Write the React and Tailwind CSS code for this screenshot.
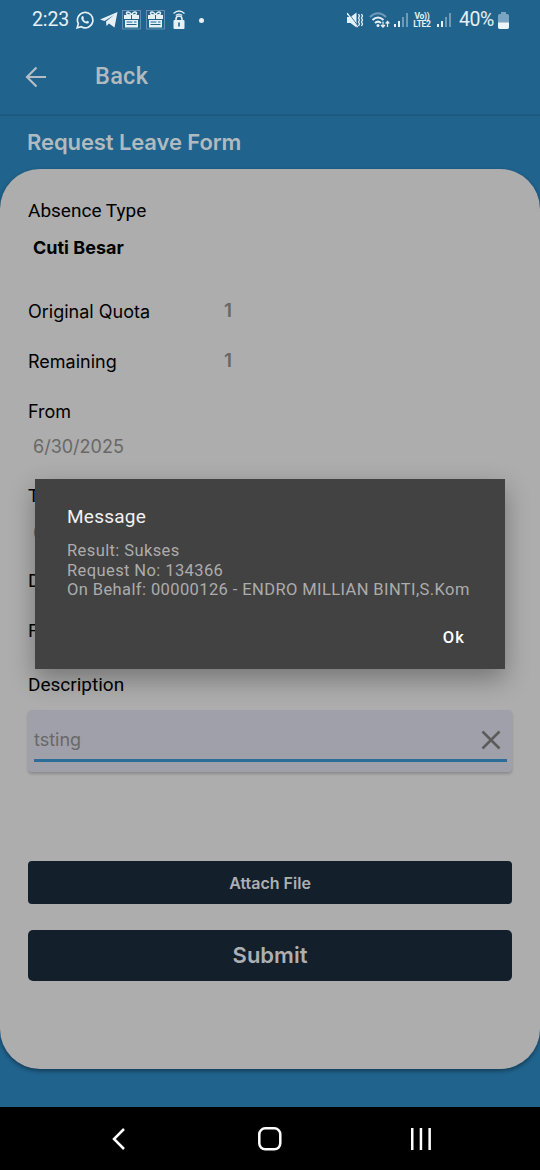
import React, { useState } from 'react';
import { IoLogoWhatsapp } from 'react-icons/io5';

function GiftIcon() {
    return (
        <svg width="19" height="20" viewBox="0 0 19 20" fill="none">
            <rect x="0.5" y="0.5" width="18" height="18.5" stroke="#6f9cb9" strokeWidth="0.8" />
            <path d="M9.5 5C8 1.5 4.500 1.200 4.500 3.200S7.500 5 9.500 5ZM9.500 5C11 1.500 14.500 1.200 14.500 3.200S11.500 5 9.500 5Z" stroke="#e6f0f5" strokeWidth="1.400" />
            <path d="M2 5h15v4H2zM3 10h13v7.500H3z" fill="#e6f0f5" />
            <path d="M9.500 5v4M4.500 12h6M4.500 14.500h10M12 12h2.500" stroke="#20638d" strokeWidth="1" />
        </svg>
    );
}

function SignalIcon() {
    return (
        <svg width="15" height="15" viewBox="0 0 15 15">
            <rect x="0" y="11" width="2" height="3" fill="#e6f0f5" />
            <rect x="4" y="8" width="2" height="6" fill="#e6f0f5" />
            <rect x="8" y="4" width="2" height="10" fill="#6e9ab6" />
            <rect x="12" y="0" width="2" height="14" fill="#6e9ab6" />
        </svg>
    );
}

function StatusBar() {
    return (
        <div className="flex h-10 items-center pl-8 text-[#e6f0f5]">
            <span className="w-[44px] whitespace-nowrap text-[19.5px] tracking-[-0.1px]">2:23</span>
            <svg className="shrink-0" width="18" height="18" viewBox="0 0 24 24" fill="none" stroke="currentColor" strokeWidth="2.2">
                <path d="M1.500 22.500l1.600-5.600A10.300 10.300 0 1 1 7 21z" />
                <path d="M8 7l1.500-.3 1.200 2.800-1 1.300c.8 1.600 2 2.700 3.600 3.500l1.400-1.300 2.700 1.300c-.2 2-1.500 2.700-3 2.500-3.800-.6-7-3.800-7.400-7.300C7 8.300 7.400 7.500 8 7z" fill="currentColor" stroke="none" />
            </svg>
            <svg className="ml-[6px] shrink-0" width="18" height="16" viewBox="0 0 18 16" fill="currentColor">
                <path d="M0 7.500L17.500 0 14.500 15.500 9 11.500 6.500 14 6 9.500 14 3 4.500 9z" />
            </svg>
            <span className="ml-[4px]"><GiftIcon /></span>
            <span className="ml-[5px]"><GiftIcon /></span>
            <svg className="ml-[7px] shrink-0" width="14" height="20" viewBox="0 0 14 20" fill="none" stroke="currentColor" strokeWidth="1.3">
                <path d="M1.500 3.500Q7-1.500 12.500 3.500M3.800 5.500Q7 2.700 10.200 5.500" />
                <path d="M4 11V9a3 3 0 0 1 6 0v2" strokeWidth="1.600" />
                <rect x="1.500" y="10" width="11" height="9" rx="1" fill="currentColor" stroke="none" />
                <path d="M7 12.500v4" stroke="#20638d" strokeWidth="1.600" />
            </svg>
            <span className="ml-[13px] size-[5px] rounded-full bg-[#e6f0f5]" />
            <div className="ml-auto flex items-center pr-[31px]">
                <svg width="16" height="16" viewBox="0 0 16 16" fill="none" stroke="currentColor">
                    <path d="M0 5h3.500L9.500 .5v15L3.500 11H0z" fill="currentColor" stroke="none" />
                    <path d="M0 1l11 14" strokeWidth="1.500" />
                    <path d="M0 -.8l12 16" stroke="#20638d" strokeWidth="0.800" />
                    <path d="M11.500 2l1 2-1 2 1 2-1 2 1 2-1 2M14.500 2l1 2-1 2 1 2-1 2 1 2-1 2" strokeWidth="1.300" />
                </svg>
                <svg className="ml-[6px]" width="21" height="17" viewBox="0 0 21 17" fill="none" stroke="currentColor" strokeWidth="2">
                    <path d="M1 5Q9-2.500 17 5" stroke="#6e9ab6" />
                    <path d="M3.500 8Q9 3 14.500 8M6 11Q9 8.300 12 11" />
                    <circle cx="9" cy="13.500" r="1.500" fill="currentColor" stroke="none" />
                    <path d="M14 9.500v5.500M12 13l2 2.200 2-2.200M18.500 15V9.500M16.700 11.500l1.800-2 1.800 2" strokeWidth="1.200" />
                </svg>
                <span className="ml-[4px]"><SignalIcon /></span>
                <div className="ml-[2px] flex w-[22px] flex-col items-center text-[8.5px] leading-[8px] font-bold tracking-[-0.3px]">
                    <span>Vo))</span>
                    <span>LTE2</span>
                </div>
                <span className="ml-[4px]"><SignalIcon /></span>
                <span className="ml-[7px] w-[37px] whitespace-nowrap text-[19.500px] tracking-[-0.5px]">40%</span>
                <svg className="ml-[2px]" width="11" height="17" viewBox="0 0 11 17">
                    <path d="M3 0h5v2h1.500Q11 2 11 4v11q0 2-2 2H2q-2 0-2-2V4Q0 2 1.500 2H3z" fill="#7aa4bf" />
                    <path d="M0 10.500h11V15q0 2-2 2H2q-2 0-2-2z" fill="#eef5f8" />
                </svg>
            </div>
        </div>
    );
}

function NavBar() {
    return (
        <div className="flex h-[63px] items-center bg-black pl-[111px]">
            <svg width="15" height="24" viewBox="0 0 15 24" fill="none" stroke="#fff" strokeWidth="2.500">
                <path d="M13 2L3 12l10 10" />
            </svg>
            <svg className="ml-[132px]" width="24" height="24" viewBox="0 0 24 24" fill="none" stroke="#fff" strokeWidth="2.500">
                <rect x="1.300" y="1.300" width="21" height="21" rx="6" />
            </svg>
            <svg className="ml-[129px]" width="20" height="22" viewBox="0 0 20 22" fill="#fff">
                <rect x="0" width="2.500" height="22" />
                <rect x="8.700" width="2.500" height="22" />
                <rect x="17.400" width="2.500" height="22" />
            </svg>
        </div>
    );
}

function MessageDialog({ onClose }) {
    return (
        <div className="absolute top-[479px] left-[35px] h-[190px] w-[470px] bg-[#424242] pt-[26px] pl-8 shadow-[0_10px_24px_rgba(0,0,0,0.32)]">
            <h2 className="text-[19px] leading-[24px] tracking-[0.25px] text-[#f2f2f2]">Message</h2>
            <p className="mt-[12px] text-[16.500px] leading-[19.500px] tracking-[0.4px] whitespace-nowrap text-[#acacac]">
                Result: Sukses<br />
                Request No: 134366<br />
                On Behalf: 00000126 - ENDRO MILLIAN BINTI,S.Kom
            </p>
            <div className="mt-[26px] flex justify-end pr-10">
                <button onClick={onClose} className="text-[16.500px] leading-[24px] font-medium tracking-[1.2px] text-white">Ok</button>
            </div>
        </div>
    );
}

function App() {
    const [open, setOpen] = useState(true);
    const [description, setDescription] = useState('tsting');

    return (
        <div className="relative flex h-[1170px] w-[540px] flex-col overflow-hidden bg-[#20638d] font-['Roboto',sans-serif]">
            <StatusBar />
            <header className="flex h-[76px] items-center border-b-2 border-[#1d5a82] pl-[25px]">
                <svg width="22" height="22" viewBox="0 0 22 22" fill="none" stroke="#b4bdc3" strokeWidth="2.200">
                    <path d="M21 11H2M11.500 1.500L2 11l9.500 9.500" />
                </svg>
                <span className="ml-12 text-[23.500px] font-medium tracking-[0.3px] text-[#b0babf]">Back</span>
            </header>
            <h1 className="flex h-[53px] items-center pl-[27px] font-['Inter',sans-serif] text-[22px] font-semibold tracking-[-0.1px] text-[#b0babf]">Request Leave Form</h1>

            <main className="flex h-[900px] flex-col rounded-[40px] bg-[#adadad] px-7 pt-6 text-[19px] text-black shadow-[0_2px_4px_rgba(0,0,0,0.4)]">
                <div className="flex h-9 items-center">Absence Type</div>
                <div className="flex h-9 items-center pl-[5px] font-['Inter',sans-serif] text-[18px] font-bold">Cuti Besar</div>

                <div className="mt-[21px] grid h-[50px] grid-cols-[196px_1fr] items-center font-['Inter',sans-serif] text-[18px]">
                    <span>Original Quota</span>
                    <span className="text-[19px] font-semibold text-[#686868]">1</span>
                </div>
                <div className="grid h-[50px] grid-cols-[196px_1fr] items-center font-['Inter',sans-serif] text-[18px]">
                    <span>Remaining</span>
                    <span className="text-[19px] font-semibold text-[#686868]">1</span>
                </div>

                <div className="mt-[7px] flex h-9 items-center font-['Inter',sans-serif] text-[18px]">From</div>
                <div className="flex h-[35px] items-center pl-[5px] font-['Inter',sans-serif] text-[18px] text-[#686868]">6/30/2025</div>
                <div className="mt-[14px] flex h-9 items-center">To</div>
                <div className="flex h-9 items-center pl-[5px] font-['Inter',sans-serif] text-[18px] text-[#686868]">6/30/2025</div>
                <div className="mt-[6px] flex h-[50px] items-center">Days</div>
                <div className="flex h-[50px] items-center">File</div>

                <div className="mt-[11px] flex h-9 items-center">Description</div>
                <div className="mt-[7px] h-[62px] rounded-[4px] bg-[#a0a0aa] pt-[10px] pr-[5px] pl-[6px] shadow-[0_2px_3px_rgba(0,0,0,0.2)]">
                    <div className="flex h-[42px] items-center border-b-[3px] border-[#2b6d96] pr-[6px]">
                        <input
                            value={description}
                            onChange={(e) => setDescription(e.target.value)}
                            className="min-w-0 flex-1 bg-transparent font-['Inter',sans-serif] text-[18px] text-[#686868] outline-none"
                        />
                        <svg onClick={() => setDescription('')} width="20" height="20" viewBox="0 0 20 20" fill="none" stroke="#5b5b5b" strokeWidth="2.500">
                            <path d="M1.500 1.500l17 17M18.500 1.500l-17 17" />
                        </svg>
                    </div>
                </div>

                <button className="mt-[89px] h-[43px] rounded-[4px] bg-[#13202c] font-['Inter',sans-serif] text-[16px] font-semibold text-[#adb0b2]">Attach File</button>
                <button className="mt-[26px] h-[51px] rounded-[5px] bg-[#13202c] font-['Inter',sans-serif] text-[22px] font-semibold text-[#adb0b2]">Submit</button>
            </main>

            <div className="h-[38px]" />
            <NavBar />
            {open && <MessageDialog onClose={() => setOpen(false)} />}
        </div>
    );
}

export default App;
